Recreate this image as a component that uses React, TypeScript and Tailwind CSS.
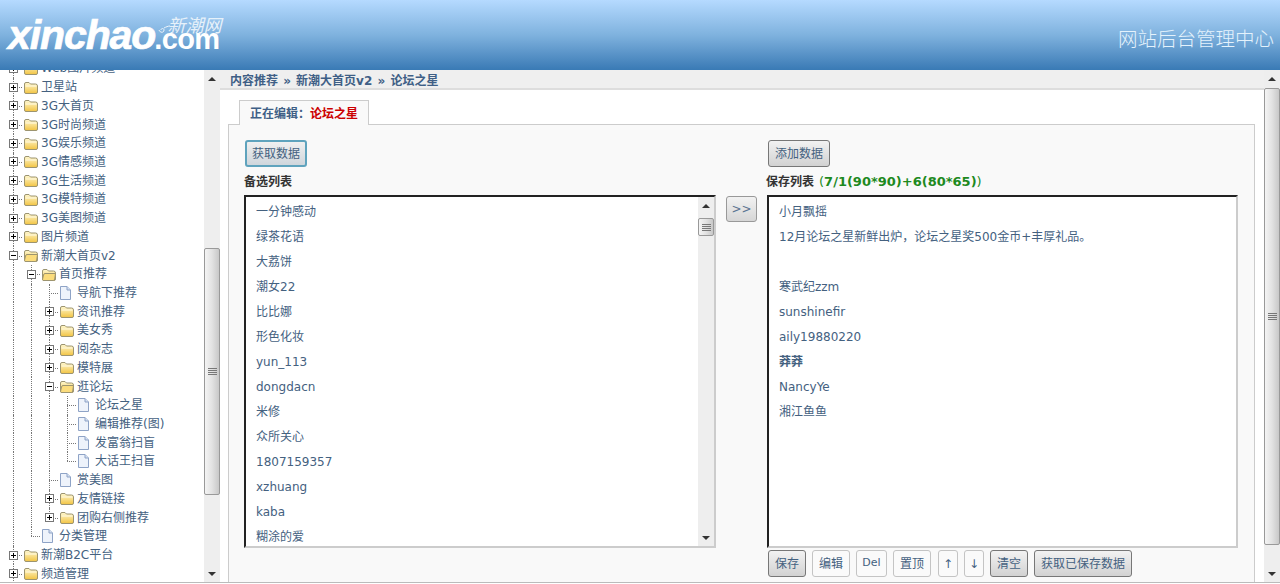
const FONT = 'font-["DejaVu_Sans","Noto_Sans_CJK_SC",sans-serif]';

type Row = {
    label: string;
    level: number;
    kind: 'plus' | 'minus' | 'leaf';
    guides?: number[];
    last?: boolean;
};

const rows: Row[] = [
    { label: 'Web图片频道', level: 0, kind: 'plus' },
    { label: '卫星站', level: 0, kind: 'plus' },
    { label: '3G大首页', level: 0, kind: 'plus' },
    { label: '3G时尚频道', level: 0, kind: 'plus' },
    { label: '3G娱乐频道', level: 0, kind: 'plus' },
    { label: '3G情感频道', level: 0, kind: 'plus' },
    { label: '3G生活频道', level: 0, kind: 'plus' },
    { label: '3G模特频道', level: 0, kind: 'plus' },
    { label: '3G美图频道', level: 0, kind: 'plus' },
    { label: '图片频道', level: 0, kind: 'plus' },
    { label: '新潮大首页v2', level: 0, kind: 'minus' },
    { label: '首页推荐', level: 1, kind: 'minus', guides: [0] },
    { label: '导航下推荐', level: 2, kind: 'leaf', guides: [0, 1] },
    { label: '资讯推荐', level: 2, kind: 'plus', guides: [0, 1] },
    { label: '美女秀', level: 2, kind: 'plus', guides: [0, 1] },
    { label: '阅杂志', level: 2, kind: 'plus', guides: [0, 1] },
    { label: '模特展', level: 2, kind: 'plus', guides: [0, 1] },
    { label: '逛论坛', level: 2, kind: 'minus', guides: [0, 1] },
    { label: '论坛之星', level: 3, kind: 'leaf', guides: [0, 1, 2] },
    { label: '编辑推荐(图)', level: 3, kind: 'leaf', guides: [0, 1, 2] },
    { label: '发富翁扫盲', level: 3, kind: 'leaf', guides: [0, 1, 2] },
    { label: '大话王扫盲', level: 3, kind: 'leaf', guides: [0, 1, 2], last: true },
    { label: '赏美图', level: 2, kind: 'leaf', guides: [0, 1] },
    { label: '友情链接', level: 2, kind: 'plus', guides: [0, 1] },
    { label: '团购右侧推荐', level: 2, kind: 'plus', guides: [0, 1], last: true },
    { label: '分类管理', level: 1, kind: 'leaf', guides: [0], last: true },
    { label: '新潮B2C平台', level: 0, kind: 'plus' },
    { label: '频道管理', level: 0, kind: 'plus' },
];

const candidates = ['一分钟感动', '绿茶花语', '大荔饼', '潮女22', '比比娜', '形色化妆', 'yun_113', 'dongdacn', '米修', '众所关心', '1807159357', 'xzhuang', 'kaba', '糊涂的爱'];
const saved = ['小月飘摇', '12月论坛之星新鲜出炉，论坛之星奖500金币+丰厚礼品。', '', '寒武纪zzm', 'sunshinefir', 'aily19880220', '莽莽', 'NancyYe', '湘江鱼鱼'];

const Folder = ({ open }: { open: boolean }) => (
    <svg width="16" height="15" viewBox="0 0 16 15" className="shrink-0">
        <defs>
            <linearGradient id="fold" x1="0" y1="0" x2="0" y2="1">
                <stop offset="0" stopColor="#fff8d0" />
                <stop offset="1" stopColor="#f2c443" />
            </linearGradient>
        </defs>
        <path d="M1.5 12V4q0-1.5 1.5-1.500h3l1.500 1.500h5q2 0 2 2V12q0 1.500-1.500 1.500H3q-1.500 0-1.500-1.500z" fill="url(#fold)" stroke="#9c9470" />
        {open ? (
            <path d="M1.500 12.500l1-4.500q.3-1.500 1.500-1.500h10.500l-.8 5.500q-.2 1.500-1.500 1.500H3q-1.500 0-1.500-1z" fill="#fbdc7c" stroke="#9c9470" />
        ) : (
            <path d="M2.500 6h11" stroke="#fffbe6" fill="none" />
        )}
    </svg>
);

const Page = () => (
    <svg width="13" height="14" viewBox="0 0 13 14" className="ml-px mr-auto shrink-0">
        <path d="M1.500.5h6.500l3.500 3.500v9.500H1.500z" fill="#eef3fb" stroke="#8ea3c6" />
        <path d="M8 .5v3.500h3.500" fill="#d5e0f2" stroke="#8ea3c6" />
    </svg>
);

const ToggleBox = ({ plus }: { plus: boolean }) => (
    <span className="relative z-10 block w-[9px] h-[9px] border border-[#777] bg-white">
        <span className="absolute left-[1px] top-[3px] w-[5px] h-px bg-black" />
        {plus && <span className="absolute left-[3px] top-[1px] w-px h-[5px] bg-black" />}
    </span>
);

const TreeRow = ({ row }: { row: Row }) => {
    const toggle = row.kind !== 'leaf';
    return (
        <div className="flex items-center h-[18.73px] whitespace-nowrap">
            {Array.from({ length: row.level }).map((_, i) => (
                <span key={i} className="relative w-[18px] h-full shrink-0">
                    {row.guides?.includes(i) && <span className="absolute left-[9px] top-0 h-full border-l border-dotted border-[#777]" />}
                </span>
            ))}
            <span className="relative flex items-center justify-center w-[18px] h-full shrink-0">
                <span className={`absolute left-[9px] top-0 border-l border-dotted border-[#777] ${row.last ? 'h-1/2' : 'h-full'}`} />
                <span className="absolute left-[9px] right-0 top-1/2 border-t border-dotted border-[#777]" />
                {toggle && <ToggleBox plus={row.kind === 'plus'} />}
            </span>
            <span className="flex items-center justify-center w-[18px] shrink-0">
                {toggle ? <Folder open={row.kind === 'minus'} /> : <Page />}
            </span>
            <span className="ml-px text-xs leading-none text-[#44617f]">{row.label}</span>
        </div>
    );
};

const Grip = () => (
    <span className="flex flex-col gap-px w-[9px]">
        <span className="h-px bg-[#777]" />
        <span className="h-px bg-[#777]" />
        <span className="h-px bg-[#777]" />
        <span className="h-px bg-[#777]" />
    </span>
);

const Scrollbar = ({ before, thumb, className }: { before: number; thumb: number; className: string }) => (
    <div className={`flex flex-col items-center shrink-0 w-4 bg-[#eeeeee] ${className}`}>
        <div className="flex items-center justify-center h-[17px] w-full shrink-0">
            <span className="w-0 h-0 border-x-[4px] border-x-transparent border-b-[4px] border-b-[#333]" />
        </div>
        <div className="w-full shrink-0" style={{ height: before }} />
        <div
            className="flex items-center justify-center w-full shrink-0 rounded-[2px] border border-[#999] bg-gradient-to-r from-[#f4f4f4] via-[#e2e2e2] to-[#c8c8c8]"
            style={{ height: thumb }}
        >
            <Grip />
        </div>
        <div className="flex-1" />
        <div className="flex items-center justify-center h-[17px] w-full shrink-0">
            <span className="w-0 h-0 border-x-[4px] border-x-transparent border-t-[4px] border-t-[#333]" />
        </div>
    </div>
);

const Btn = ({ children, w, light }: { children: React.ReactNode; w: string; light?: boolean }) => (
    <button
        className={`${w} h-[27px] shrink-0 rounded-[3px] border text-xs text-[#44617f] ${
            light ? 'border-[#c4c4c4] bg-[#fafafa]' : 'border-[#777] bg-gradient-to-b from-[#f2f2f2] to-[#d2d2d2]'
        }`}
    >
        {children}
    </button>
);

const ListBox = ({ items, scroll }: { items: string[]; scroll?: boolean }) => (
    <div className="flex shrink-0 h-[353px] overflow-hidden border-2 border-t-[#222] border-l-[#222] border-r-[#ccc] border-b-[#ccc] bg-white">
        <ul className="flex-1 pt-[2px] pl-[10px]">
            {items.map((item, i) => (
                <li key={i} className={`flex items-center h-[25px] text-xs text-[#44617f] whitespace-nowrap ${item === '莽莽' ? 'font-bold' : ''}`}>
                    {item}
                </li>
            ))}
        </ul>
        {scroll && <Scrollbar before={4} thumb={18} className="h-full" />}
    </div>
);

export default function App() {
    return (
        <div className={`flex flex-col w-[1280px] h-[584px] overflow-hidden bg-white pb-px ${FONT}`}>
            <header className="flex justify-between h-[70px] shrink-0 pl-2 pr-[6px] bg-gradient-to-b from-[#b5daff] via-[#7fb2de] to-[#397ab5]">
                <div className="relative flex items-baseline self-start mt-[15px] font-['Liberation_Sans',sans-serif] font-bold italic text-white">
                    <span className="text-[41px] tracking-[-1.1px] leading-none [-webkit-text-stroke:0.7px_white]">xinchao</span>
                    <span className="text-[29px] not-italic tracking-[-0.6px] leading-none -ml-px">.com</span>
                    <svg width="12" height="9" viewBox="0 0 12 9" className="absolute left-[150px] top-[10px]" fill="none" stroke="#eef5fb">
                        <path d="M1 5c1 3 5 3 5 0 0-2-3-2-3 0M6 3c2-1 4-2 6-2" />
                    </svg>
                    <span className="absolute -right-[2px] top-0 text-[18px] font-normal leading-none text-[#e6f1fa] font-['Noto_Sans_CJK_SC',sans-serif]">新潮网</span>
                </div>
                <span className="mt-[24px] self-start text-[19.5px] leading-[28px] font-light text-[#e4f2fc] font-['Noto_Sans_CJK_SC',sans-serif]">网站后台管理中心</span>
            </header>

            <div className="flex flex-1 min-h-0 border-b border-[#bbbbbb]">
                <aside className="w-[204px] shrink-0 overflow-hidden pl-1">
                    <div className="-mt-[11px]">
                        {rows.map((row) => (
                            <TreeRow key={row.label} row={row} />
                        ))}
                    </div>
                </aside>
                <Scrollbar before={161} thumb={247} className="h-full" />

                <main className="flex flex-col flex-1 min-w-0">
                    <div className="flex items-center h-[20px] shrink-0 pl-[10px] pt-[3px] bg-[#efefef] border-b-2 border-[#dddddd] text-xs font-bold text-[#3f5f86] [word-spacing:1px]">
                        内容推荐 » 新潮大首页v2 » 论坛之星
                    </div>
                    <div className="flex flex-col flex-1 min-h-0 pt-[10px] pl-2 pr-[9px]">
                        <div className="flex">
                            <div className="relative z-10 flex items-center ml-[11px] -mb-px h-[25px] w-[130px] pt-px justify-center border border-b-0 border-[#cccccc] bg-[#f9f9f9] text-xs font-bold text-[#3f5f86]">
                                <span>正在编辑：</span>
                                <span className="text-[#cc0000]">论坛之星</span>
                            </div>
                        </div>
                        <div className="flex flex-1 min-h-0 border border-b-0 border-[#cccccc] bg-[#f9f9f9] pt-[15px] pl-[15px] pr-[15px]">
                            <section className="flex flex-col w-[472px] shrink-0">
                                <button className="ml-px w-[62px] h-[27px] shrink-0 rounded-[3px] border-2 border-[#5fa3bd] bg-gradient-to-b from-[#f0f0f0] to-[#cfd6dc] text-xs text-[#44617f]">
                                    获取数据
                                </button>
                                <h3 className="flex items-center h-[28px] shrink-0 pt-[2px] text-xs font-bold text-[#333]">备选列表</h3>
                                <ListBox items={candidates} scroll />
                            </section>

                            <div className="w-[51px] shrink-0 pl-[10px] pt-[56px]">
                                <button className="w-[31px] h-[26px] rounded-[3px] border border-[#999] bg-gradient-to-b from-[#f2f2f2] to-[#d6d6d6] text-xs text-[#5a7492]">
                                    &gt;&gt;
                                </button>
                            </div>

                            <section className="flex flex-col w-[471px] shrink-0">
                                <div className="pl-px">
                                    <Btn w="w-[62px]">添加数据</Btn>
                                </div>
                                <h3 className="flex items-center gap-[5px] h-[28px] shrink-0 pt-[2px] -ml-px text-xs font-bold text-[#333] whitespace-nowrap">
                                    <span>保存列表</span>
                                    <span className="text-[13px] font-normal text-[#1e8a1e]">
                                        (<span className="font-bold">7/1(90*90)+6(80*65)</span>)
                                    </span>
                                </h3>
                                <ListBox items={saved} />
                                <div className="flex gap-[6px] pt-[2px] pl-px">
                                    <Btn w="w-[38px]">保存</Btn>
                                    <Btn w="w-[38px]" light>编辑</Btn>
                                    <Btn w="w-[31px] text-[11px]" light>Del</Btn>
                                    <Btn w="w-[38px]" light>置顶</Btn>
                                    <Btn w="w-[20px] ml-px" light>↑</Btn>
                                    <Btn w="w-[20px]" light>↓</Btn>
                                    <Btn w="w-[38px]">清空</Btn>
                                    <Btn w="w-[98px]">获取已保存数据</Btn>
                                </div>
                            </section>
                        </div>
                    </div>
                </main>

                <Scrollbar before={1} thumb={457} className="h-full" />
            </div>
        </div>
    );
}
